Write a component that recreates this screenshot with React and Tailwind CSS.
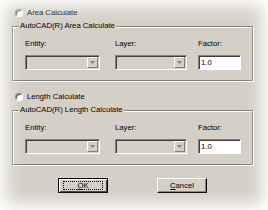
import React from 'react'

function Radio({ label }) {
  return (
    <div className="flex items-center h-[10px] pl-[3px]">
      <span className="w-[8px] h-[8px] rounded-full bg-white border border-[#808080] border-b-white border-r-white shadow-[inset_1px_1px_0_#404040]" />
      <span className="ml-[4px] leading-none">{label}</span>
    </div>
  )
}

function Combo({ width }) {
  return (
    <div
      className={`${width} h-[15px] flex items-center justify-end border border-[#808080] border-b-white border-r-white bg-[#d4d0c8] shadow-[inset_1px_1px_0_#404040,inset_-1px_-1px_0_#d4d0c8]`}
    >
      <div className="w-[11px] h-[11px] mr-[1px] flex items-center justify-center bg-[#d4d0c8] border border-white border-b-[#808080] border-r-[#808080]">
        <svg width="5" height="3" viewBox="0 0 5 3">
          <path d="M0 0h5L2.5 3z" fill="#808080" />
        </svg>
      </div>
    </div>
  )
}

function Group({ title }) {
  return (
    <div className="relative w-[241px] h-[55px] border border-[#808080] shadow-[1px_1px_0_white,inset_1px_1px_0_white] pl-[12px] pt-[12px]">
      <span className="absolute -top-[5px] left-[6px] bg-[#d4d0c8] px-[1px] leading-none">{title}</span>
      <div className="flex">
        <div className="flex flex-col w-[75px]">
          <span className="leading-[9px]">Entity:</span>
          <div className="mt-[7px]"><Combo width="w-[75px]" /></div>
        </div>
        <div className="flex flex-col w-[72px] ml-[15px]">
          <span className="leading-[9px]">Layer:</span>
          <div className="mt-[7px]"><Combo width="w-[72px]" /></div>
        </div>
        <div className="flex flex-col w-[43px] ml-[11px]">
          <span className="leading-[9px]">Factor:</span>
          <div className="mt-[7px] h-[15px] bg-white border border-[#808080] border-b-white border-r-white shadow-[inset_1px_1px_0_#404040] flex items-center pl-[2px] leading-none">
            1.0
          </div>
        </div>
      </div>
    </div>
  )
}

function Button({ children, isDefault }) {
  return (
    <div
      className={`w-[50px] h-[15px] flex items-center justify-center bg-[#d4d0c8] ${
        isDefault
          ? 'border border-black shadow-[inset_1px_1px_0_white,inset_-1px_-1px_0_#404040]'
          : 'border border-white border-b-black border-r-black shadow-[inset_-1px_-1px_0_#808080]'
      }`}
    >
      {isDefault ? (
        <span className="w-[40px] h-[9px] flex items-center justify-center leading-none border border-dotted border-black">
          {children}
        </span>
      ) : (
        <span className="leading-none">{children}</span>
      )}
    </div>
  )
}

export default function App() {
  return (
    <div className="relative w-[268px] h-[210px] overflow-hidden bg-[#d4d0c8] text-black text-[7.7px] font-['Liberation_Sans',Arial,sans-serif] pl-[12px] pt-[8px]">
      <Radio label="Area Calculate" />
      <div className="mt-[8px]">
        <Group title="AutoCAD(R) Area Calculate" />
      </div>
      <div className="mt-[11px]">
        <Radio label="Length Calculate" />
      </div>
      <div className="mt-[8px]">
        <Group title="AutoCAD(R) Length Calculate" />
      </div>
      <div className="mt-[13px] flex pl-[46px] gap-[49px]">
        <Button isDefault>
          <span className="underline">O</span>K
        </Button>
        <Button>
          <span className="underline">C</span>ancel
        </Button>
      </div>
      <div className="pointer-events-none absolute inset-0 shadow-[inset_0_0_16px_6px_white]" />
    </div>
  )
}
